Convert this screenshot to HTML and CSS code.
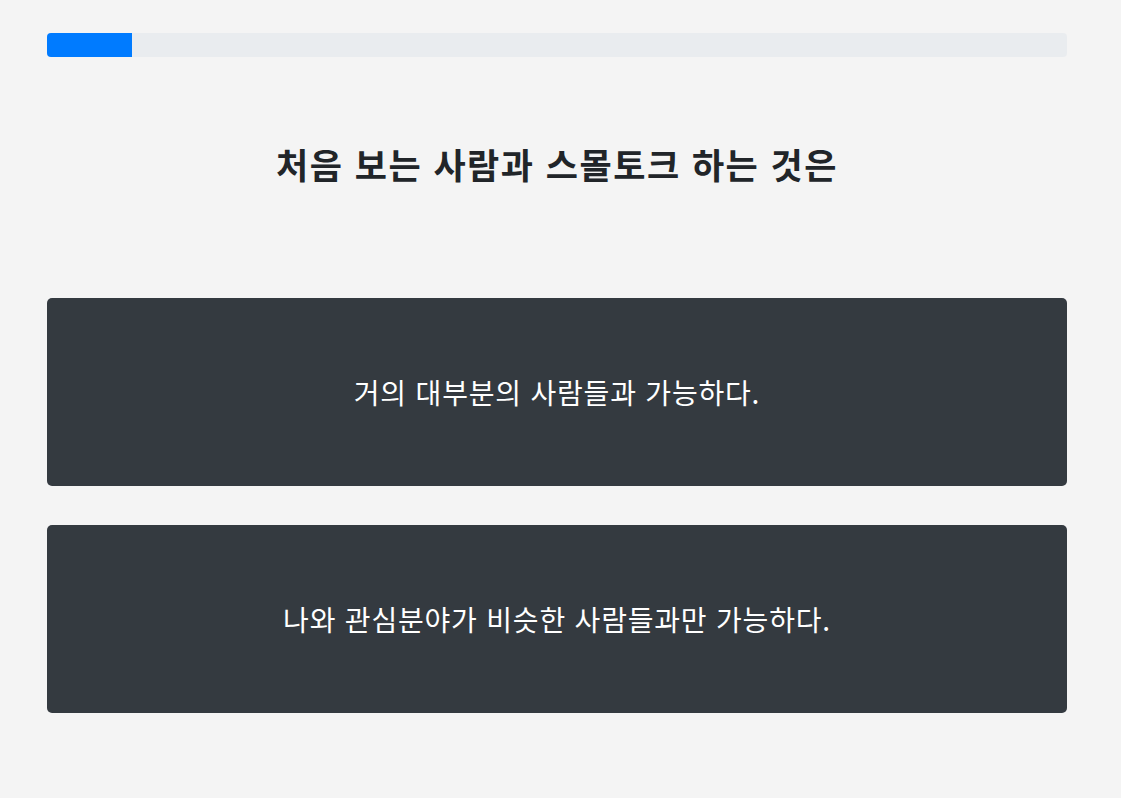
FILE: index.html
```html
<!DOCTYPE html>
<html lang="ko">
<head>
  <meta charset="UTF-8">
  <meta name="viewport" content="width=device-width, initial-scale=1.0">
  <title>Quiz</title>
  <link rel="stylesheet" href="styles.css">
</head>
<body>
<div class="wrap">
  <div class="progress">
    <div class="progress-bar" style="width: 8.333%"></div>
  </div>

  <h2 class="question">처음 보는 사람과 스몰토크 하는 것은</h2>

  <div class="answers">
    <button class="answer">거의 대부분의 사람들과 가능하다.</button>
    <button class="answer">나와 관심분야가 비슷한 사람들과만 가능하다.</button>
  </div>
</div>
</body>
</html>
```

FILE: styles.css
```css
body {
  margin: 0;
  background-color: #f4f4f4;
  font-family: "Noto Sans CJK KR", "Noto Sans", sans-serif;
  color: #212529;
}

.wrap {
  width: 1020px;
  padding: 33px 0 0 47px;
}

.progress {
  height: 24px;
  background-color: #e9ecef;
  border-radius: 4px;
  overflow: hidden;
}

.progress-bar {
  height: 100%;
  background-color: #007bff;
}

.question {
  margin: 85px 0 0;
  font-size: 35px;
  line-height: 44px;
  letter-spacing: 1.5px;
  font-weight: 700;
  text-align: center;
}

.answers {
  display: flex;
  flex-direction: column;
  gap: 39px;
  margin-top: 112px;
}

.answer {
  height: 188px;
  border: none;
  border-radius: 5px;
  background-color: #343a40;
  color: #fff;
  font-family: inherit;
  font-size: 28px;
  line-height: 34px;
  letter-spacing: 0.8px;
  cursor: pointer;
}
```
